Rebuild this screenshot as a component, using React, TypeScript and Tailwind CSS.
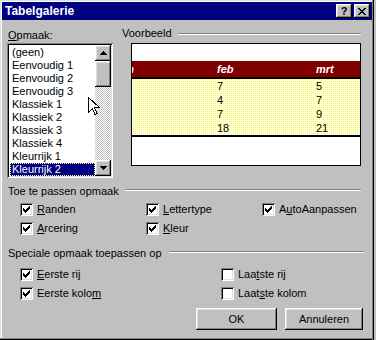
import React from 'react';

const RAISED = 'shadow-[inset_-1px_-1px_#000,inset_1px_1px_#fff,inset_-2px_-2px_#808080,inset_2px_2px_#dfdfdf]';
const SUNKEN = 'shadow-[inset_1px_1px_#808080,inset_-1px_-1px_#fff,inset_2px_2px_#000,inset_-2px_-2px_#dfdfdf]';

const STYLES = ['(geen)', 'Eenvoudig 1', 'Eenvoudig 2', 'Eenvoudig 3', 'Klassiek 1', 'Klassiek 2', 'Klassiek 3', 'Klassiek 4', 'Kleurrijk 1', 'Kleurrijk 2'];

const ROWS = [
  ['', '7', '5'],
  ['', '4', '7'],
  ['', '7', '9'],
  ['', '18', '21'],
];

// label with an underlined access key
const Mn = ({ text, at }: { text: string; at: number }) => (
  <span className="leading-[13px] whitespace-nowrap">
    {text.slice(0, at)}
    <u>{text[at]}</u>
    {text.slice(at + 1)}
  </span>
);

const Tick = () => (
  <svg width="7" height="7" viewBox="0 0 7 7" shapeRendering="crispEdges">
    <path d="M6 0h1v1h-1z M5 1h2v1h-2z M0 2h1v1h-1z M4 2h3v1h-3z M0 3h2v1h-2z M3 3h3v1h-3z M0 4h5v1h-5z M1 5h3v1h-3z M2 6h1v1h-1z" fill="#000" />
  </svg>
);

const CheckBox = ({ checked }: { checked: boolean }) => (
  <span className={`w-[13px] h-[13px] bg-white shrink-0 flex items-center justify-center ${SUNKEN}`}>
    {checked && <Tick />}
  </span>
);

const Option = ({ text, at, checked }: { text: string; at: number; checked: boolean }) => (
  <div className="flex items-center gap-[4px] h-[13px]">
    <CheckBox checked={checked} />
    <Mn text={text} at={at} />
  </div>
);

const Groove = ({ className }: { className: string }) => (
  <div className={`flex-1 h-[2px] border-t border-t-[#808080] border-b border-b-white ${className}`} />
);

const Arrow = ({ down }: { down?: boolean }) => (
  <svg width="7" height="4" viewBox="0 0 7 4" shapeRendering="crispEdges" className={down ? 'rotate-180' : ''}>
    <path d="M3 0h1v1h-1z M2 1h3v1h-3z M1 2h5v1h-5z M0 3h7v1h-7z" fill="#000" />
  </svg>
);

export default function App() {
  return (
    <div className="relative w-[376px] h-[340px] bg-[#c0c0c0] pt-[2px] pl-[2px] pr-[4px] font-['Liberation_Sans',Arial,sans-serif] text-[11px] text-black shadow-[inset_-2px_0_#c0c0c0,inset_-3px_0_#000,inset_-4px_0_#808080,inset_0_-1px_#000,inset_0_-2px_#808080,inset_1px_1px_#dfdfdf,inset_2px_2px_#fff] overflow-hidden">
      {/* title bar */}
      <div className="h-[18px] bg-[#000080] flex items-center pl-[3px] pr-[2px]">
        <span className="text-white font-bold text-[12px] leading-[18px] flex-1">Tabelgalerie</span>
        <div className="flex gap-[2px]">
          <button type="button" className={`w-[16px] h-[14px] bg-[#c0c0c0] flex items-center justify-center text-[11px] font-bold leading-none ${RAISED}`}>
            ?
          </button>
          <button type="button" className={`w-[16px] h-[14px] bg-[#c0c0c0] flex items-center justify-center ${RAISED}`}>
            <svg width="8" height="7" viewBox="0 0 8 7" shapeRendering="crispEdges">
              <path d="M0 0h2v1h-2z M6 0h2v1h-2z M1 1h2v1h-2z M5 1h2v1h-2z M2 2h4v1h-4z M3 3h2v1h-2z M2 4h4v1h-4z M1 5h2v1h-2z M5 5h2v1h-2z M0 6h2v1h-2z M6 6h2v1h-2z" fill="#000" />
            </svg>
          </button>
        </div>
      </div>

      {/* style list + preview */}
      <div className="flex mt-[7px]">
        <div className="ml-[5px] w-[106px] shrink-0">
          <div className="pl-[1px] h-[13px]">
            <Mn text="Opmaak:" at={0} />
          </div>
          <div className={`mt-[3px] h-[135px] bg-white flex p-[2px] ${SUNKEN}`}>
            <div className="flex-1 min-w-0 pt-[1px] pl-[1px]">
              {STYLES.map((s, i) => {
                const sel = i === STYLES.length - 1;
                return (
                  <div
                    key={s}
                    className={`h-[13px] leading-[13px] px-[2px] whitespace-nowrap ${sel ? 'bg-[#000080] text-white outline-1 outline-dotted outline-[#ffff80] -outline-offset-1' : ''}`}
                  >
                    {s}
                  </div>
                );
              })}
            </div>
            <div className="w-[16px] shrink-0 flex flex-col">
              <div className={`h-[16px] bg-[#c0c0c0] flex items-center justify-center ${RAISED}`}>
                <Arrow />
              </div>
              <div className={`h-[26px] bg-[#c0c0c0] ${RAISED}`} />
              <div className="flex-1 bg-[image:repeating-conic-gradient(#ffffff_0_25%,#c0c0c0_0_50%)] [background-size:2px_2px]" />
              <div className={`h-[16px] bg-[#c0c0c0] flex items-center justify-center ${RAISED}`}>
                <Arrow down />
              </div>
            </div>
          </div>
        </div>

        <div className="ml-[9px] mr-[11px] flex-1 min-w-0">
          <div className="flex items-start h-[13px]">
            <span className="leading-[13px]">Voorbeeld</span>
            <Groove className="ml-[6px] mt-[6px]" />
          </div>
          <div className="ml-[9px] mt-[3px] h-[123px] border border-black bg-white flex flex-col overflow-hidden">
            <div className="h-[17px] shrink-0" />
            <div className="h-[16px] shrink-0 bg-[#800000] flex -ml-[14px] text-white font-bold italic leading-[16px]">
              {['jan', 'feb', 'mrt'].map((m) => (
                <div key={m} className="w-[99px] shrink-0">{m}</div>
              ))}
            </div>
            <div className="h-[2px] shrink-0 bg-black" />
            <div className="shrink-0 bg-[image:repeating-conic-gradient(#ffff00_0_25%,#ffffff_0_100%)] [background-size:2px_2px]">
              {ROWS.map((r, i) => (
                <div key={i} className="h-[14px] flex -ml-[14px] leading-[14px]">
                  {r.map((c, j) => (
                    <div key={j} className="w-[99px] shrink-0">{c}</div>
                  ))}
                </div>
              ))}
            </div>
            <div className="h-[2px] shrink-0 bg-black" />
          </div>
        </div>
      </div>

      {/* formats to apply */}
      <div className="flex items-start h-[13px] mt-[7px] pl-[6px] mr-[11px]">
        <span className="leading-[13px] whitespace-nowrap">Toe te passen opmaak</span>
        <Groove className="ml-[6px] mt-[4px]" />
      </div>
      <div className="grid grid-cols-[126px_116px_auto] gap-y-[6px] pl-[18px] mt-[5px]">
        <Option text="Randen" at={0} checked />
        <Option text="Lettertype" at={0} checked />
        <Option text="AutoAanpassen" at={1} checked />
        <Option text="Arcering" at={0} checked />
        <Option text="Kleur" at={0} checked />
      </div>

      {/* special formats */}
      <div className="flex items-start h-[13px] mt-[12px] pl-[6px] mr-[8px]">
        <span className="leading-[13px] whitespace-nowrap">Speciale opmaak toepassen op</span>
        <Groove className="ml-[7px] mt-[4px]" />
      </div>
      <div className="grid grid-cols-[201px_auto] gap-y-[6px] pl-[18px] mt-[8px]">
        <Option text="Eerste rij" at={0} checked />
        <Option text="Laatste rij" at={3} checked={false} />
        <Option text="Eerste kolom" at={11} checked />
        <Option text="Laatste kolom" at={4} checked={false} />
      </div>

      {/* buttons */}
      <div className="flex justify-end gap-[8px] mt-[8px] pr-[9px]">
        <button type="button" className={`w-[81px] h-[22px] bg-[#c0c0c0] text-[11px] leading-[22px] ${RAISED}`}>OK</button>
        <button type="button" className={`w-[78px] h-[22px] bg-[#c0c0c0] text-[11px] leading-[22px] ${RAISED}`}>Annuleren</button>
      </div>

      {/* mouse pointer */}
      <svg className="absolute left-[88px] top-[97px]" width="12" height="19" viewBox="0 0 12 19" shapeRendering="crispEdges">
        <path d="M0.5 0.5 L0.5 15.5 L4.5 11.5 L7 17.5 L9 16.5 L6.5 10.5 L11.5 10.5 Z" fill="#fff" stroke="#000" strokeWidth="1" />
      </svg>
    </div>
  );
}
